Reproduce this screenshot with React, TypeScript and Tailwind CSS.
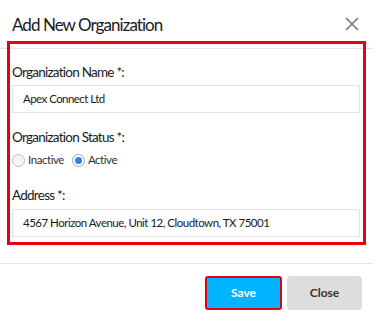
const Radio = ({ checked, label }: { checked: boolean; label: string }) => (
  <label className="flex items-center gap-[3px]">
    <span
      className={`flex h-[13px] w-[13px] items-center justify-center rounded-full border ${
        checked ? 'border-[#9aa4b0] bg-white' : 'border-[#b9bec5] bg-[#f4f5f7]'
      }`}
    >
      {checked && <span className="h-[7px] w-[7px] rounded-full bg-[#2f80ed]" />}
    </span>
    <span className="text-[11.5px] tracking-[-0.45px] text-[#333]">{label}</span>
  </label>
);

const App = () => {
  return (
    <div className="h-[322px] w-[373px] bg-white font-['Lato','Liberation_Sans',sans-serif] text-[#222]">
      <header className="flex h-[49px] items-center justify-between border-b border-[#e5e5e5] pl-3 pr-[14px]">
        <h1 className="text-[17px] leading-none tracking-[-0.95px] text-[#1a1a1a]">Add New Organization</h1>
        <svg width="14" height="14" viewBox="0 0 14 14" className="text-[#6b6b6b]">
          <path d="M1 1L13 13M13 1L1 13" stroke="currentColor" strokeWidth="1.4" />
        </svg>
      </header>

      <div className="px-[10px] pb-[21px]">
        <div className="-mt-[5px] pl-[2px] pr-[3px] pt-[18px] pb-[5px] outline-[3px] outline-[#e8000f] outline-solid">
          <div className="text-[13.5px] leading-[20px] tracking-[-0.75px] text-[#1a1a1a]">Organization Name *:</div>
          <div className="mt-[3px] flex h-[28px] items-center border border-[#dfe2e6] pl-[10px] text-[11.5px] tracking-[-0.55px] text-[#1a1a1a]">
            Apex Connect Ltd
          </div>

          <div className="mt-[14px] text-[13.5px] leading-[20px] tracking-[-0.75px] text-[#1a1a1a]">Organization Status *:</div>
          <div className="mt-[5px] flex h-[16px] items-center gap-[8px]">
            <Radio checked={false} label="Inactive" />
            <Radio checked label="Active" />
          </div>

          <div className="mt-[17px] text-[13.5px] leading-[20px] tracking-[-0.75px] text-[#1a1a1a]">Address *:</div>
          <div className="mt-[4px] flex h-[28px] items-center border border-[#dfe2e6] pl-[10px] text-[11.5px] tracking-[-0.5px] text-[#1a1a1a]">
            4567 Horizon Avenue, Unit 12, Cloudtown, TX 75001
          </div>
        </div>
      </div>

      <footer className="flex justify-end gap-[5px] border-t border-[#e5e5e5] pr-[11px] pt-[12px]">
        <button className="h-[34px] w-[77px] rounded-[3px] border-2 border-[#e8000f] bg-[#00b4ff] text-[12px] font-bold text-white">
          Save
        </button>
        <button className="h-[34px] w-[75px] rounded-[4px] bg-[#dddddd] text-[12px] font-bold text-[#333]">
          Close
        </button>
      </footer>
    </div>
  );
};

export default App;
